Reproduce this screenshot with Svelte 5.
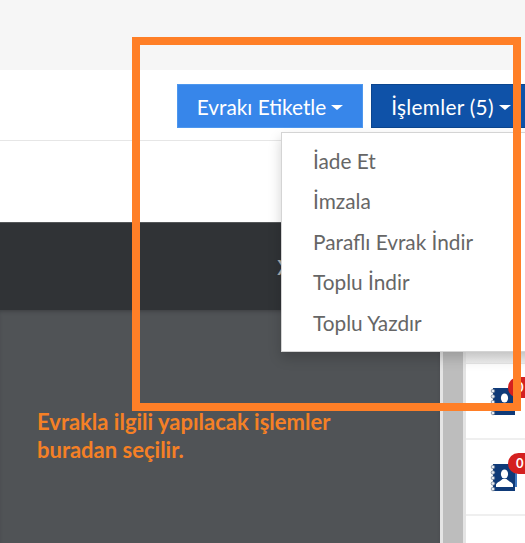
<script>
  const menuItems = ['İade Et', 'İmzala', 'Paraflı Evrak İndir', 'Toplu İndir', 'Toplu Yazdır'];
  const rings = [4, 9.5, 15, 20.5, 26];
</script>

<main class="page">
  <div class="topbar"></div>

  <div class="toolbar">
    <button class="btn light">Evrakı Etiketle<span class="caret"></span></button>
    <button class="btn dark">İşlemler (5)<span class="caret"></span></button>
  </div>

  <div class="blank"></div>

  <div class="band"><span class="close">x</span></div>

  <div class="content">
    <div class="panel">
      <p class="caption">Evrakla ilgili yapılacak işlemler<br />buradan seçilir.</p>
    </div>
    <div class="gutter"></div>
    <div class="side">
      <div class="side-head"></div>
      {#each [0, 1] as row}
        <div class="row">
          <div class="book">
            <svg width="27" height="29" viewBox="0 0 27 29">
              <rect x="3" y="1" width="22" height="27" fill="#0f3a78" />
              <rect x="25" y="7" width="2" height="17" fill="#3f78c0" />
              <g fill="#e6ebf2" stroke="#66758c" stroke-width="0.7">
                {#each rings as cy}
                  <circle cx="3" {cy} r="1.8" />
                {/each}
              </g>
              <ellipse cx="14.500" cy="11" rx="3.600" ry="4.600" fill="#fff" />
              <path d="M6 24 L6 21.500 C7 19 10.500 18.500 12.500 16 L16.500 16 C18.500 18.500 22 19 23 21.500 L23 24 Z" fill="#fff" />
            </svg>
            <span class="badge">0</span>
          </div>
        </div>
      {/each}
    </div>
  </div>

  <ul class="menu">
    {#each menuItems as item}
      <li>{item}</li>
    {/each}
  </ul>

  <div class="frame"></div>
</main>

<style>
  :global(body) {
    margin: 0;
    overflow: hidden;
  }
  .page {
    position: relative;
    width: 525px;
    height: 543px;
    overflow: hidden;
    background: #fff;
    font-family: Lato, "Open Sans", sans-serif;
  }
  .topbar {
    height: 70px;
    background: #f6f6f6;
  }
  .toolbar {
    display: flex;
    gap: 8px;
    height: 71px;
    padding: 14px 0 0 177px;
    box-sizing: border-box;
    border-bottom: 1px solid #e6e6e6;
  }
  .btn {
    display: flex;
    align-items: center;
    justify-content: center;
    flex: none;
    height: 44px;
    padding: 0;
    border: 1px solid;
    color: #fff;
    font-family: inherit;
    font-size: 20.8px;
  }
  .btn.light {
    width: 186px;
    background: #3786ea;
    border-color: #4d97ee;
  }
  .btn.dark {
    width: 160px;
    background: #0f52a8;
    border-color: #0c468f;
    letter-spacing: 0.3px;
  }
  .caret {
    margin: 2px 0 0 5px;
    border-top: 5px solid #fff;
    border-left: 6px solid transparent;
    border-right: 6px solid transparent;
  }
  .blank {
    height: 81px;
  }
  .band {
    position: relative;
    height: 88px;
    background: #303336;
    border-top: 1px solid #55585a;
    box-sizing: border-box;
  }
  .close {
    position: absolute;
    left: 277px;
    top: 24px;
    color: #a8abad;
    font-size: 28px;
  }
  .content {
    display: flex;
    height: 233px;
  }
  .panel {
    flex: none;
    width: 440px;
    background: #505356;
    box-shadow: inset 0 3px 4px -2px #3a3d40;
  }
  .caption {
    margin: 0;
    padding: 98px 0 0 37px;
    color: #f58025;
    font-size: 22px;
    font-weight: 700;
    line-height: 28px;
  }
  .gutter {
    flex: none;
    width: 26px;
    box-sizing: border-box;
    background: #bdbdbd;
    border-left: 3px solid #e4e4e4;
    border-right: 3px solid #e4e4e4;
  }
  .side {
    flex: 1;
    background: #fff;
  }
  .side-head {
    height: 53px;
    background: linear-gradient(#dcdcdc, #f0f0f0);
    border-bottom: 1px solid #e6e6e6;
  }
  .row {
    height: 76px;
    padding: 23px 0 0 24px;
    border-bottom: 2px solid #efefef;
    box-sizing: border-box;
  }
  .book {
    position: relative;
    width: 27px;
    height: 29px;
  }
  .book svg {
    display: block;
  }
  .badge {
    position: absolute;
    left: 18px;
    top: -10px;
    width: 32px;
    height: 21px;
    border-radius: 11px;
    background: #d42020;
    color: #fff;
    font-size: 13px;
    font-weight: 700;
    line-height: 21px;
    padding-left: 8px;
    box-sizing: border-box;
  }
  .menu {
    position: absolute;
    left: 281px;
    top: 132px;
    width: 260px;
    height: 220px;
    box-sizing: border-box;
    margin: 0;
    padding: 8px 0 0 31px;
    list-style: none;
    background: #fff;
    border: 1px solid #d4d4d4;
    box-shadow: 0 6px 12px rgba(0, 0, 0, 0.18);
  }
  .menu li {
    height: 40.4px;
    line-height: 40px;
    color: #666;
    font-size: 20.8px;
  }
  .frame {
    position: absolute;
    left: 132px;
    top: 37px;
    width: 389px;
    height: 374px;
    box-sizing: border-box;
    border: 8px solid #ff7f27;
  }
</style>
